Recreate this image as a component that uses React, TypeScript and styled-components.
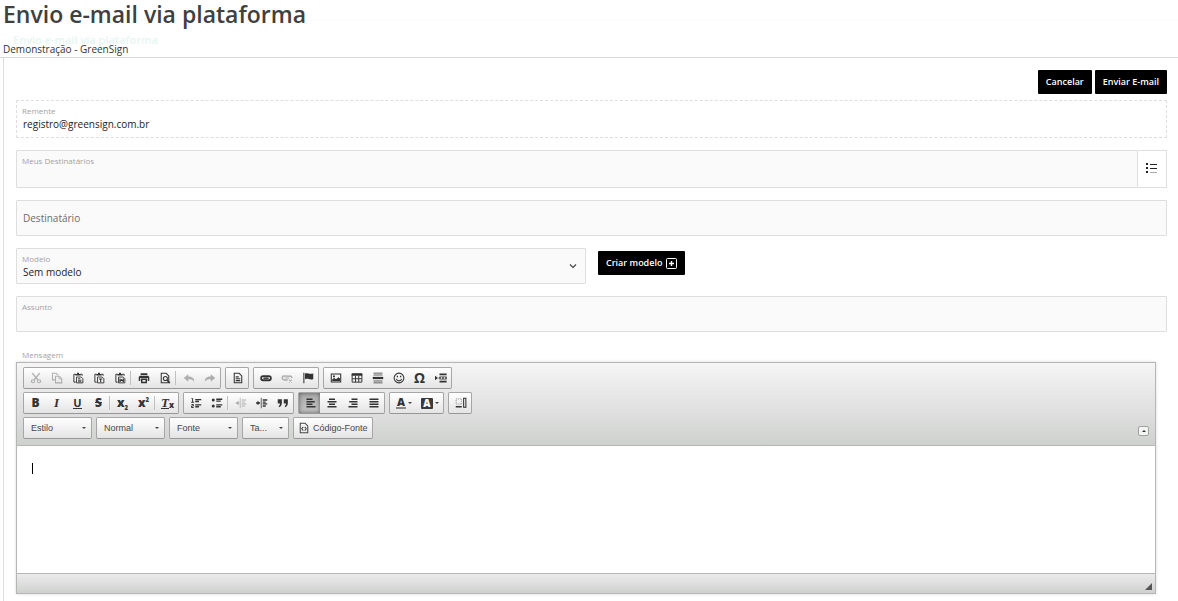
import React from "react";
import styled, { createGlobalStyle, css } from "styled-components";

const uiFont = `"Open Sans", "Noto Sans", sans-serif`;

const GlobalStyle = createGlobalStyle`
  *, *::before, *::after { box-sizing: border-box; }
  body { margin: 0; background: #fff; color: #222; font-family: ${uiFont}; }
  button, input, select { font-family: inherit; margin: 0; }
`;

const Page = styled.div`
  min-height: 100vh;
  display: flex;
  flex-direction: column;
`;

const Header = styled.header`
  position: relative;
  height: 58px;
  padding-left: 3px;
  border-bottom: 1px solid #d9d9d9;
`;

const Title = styled.h1`
  margin: 0;
  font-size: 23px;
  line-height: 28px;
  font-weight: 600;
  color: #404040;
  white-space: nowrap;
`;

const FadingTab = styled.div`
  position: absolute;
  z-index: -1;
  left: 3px;
  right: 0;
  top: 20px;
  padding: 13px 10px 0;
  border-top: 1px solid #fbfdfd;
  font-size: 11px;
  line-height: 12px;
  font-weight: 600;
  color: #e6f6f2;
`;

const Subtitle = styled.p`
  margin: 14px 0 0;
  font-size: 10px;
  line-height: 14px;
  color: #333;
`;

const Panel = styled.form`
  flex: 1;
  display: flex;
  flex-direction: column;
  gap: 12px;
  margin-left: 3px;
  padding: 12px 11px 7px 12px;
  border-left: 1px solid #dfdfdf;
`;

const Actions = styled.div`
  display: flex;
  justify-content: flex-end;
  gap: 3px;
  margin-bottom: -6px;
`;

const Button = styled.button`
  display: inline-flex;
  align-items: center;
  gap: 4px;
  height: 24px;
  padding: 0 8px;
  border: 0;
  border-radius: 1px;
  background: #000;
  color: #fff;
  font-size: 9px;
  line-height: 16px;
  font-weight: 600;
  white-space: nowrap;
`;

const Field = styled.div<{ $tall?: boolean; $dashed?: boolean; $center?: boolean }>`
  position: relative;
  flex: 1 0 auto;
  display: flex;
  flex-direction: column;
  justify-content: ${(p) => (p.$center ? "center" : "flex-start")};
  height: ${(p) => (p.$tall ? 38 : 36)}px;
  padding: 4px 5px 0;
  ${(p) => p.$center && css`padding-top: 0;`}
  border: 1px ${(p) => (p.$dashed ? "dashed" : "solid")} #dedede;
  border-radius: 1px;
  background: ${(p) => (p.$dashed ? "#fff" : "#fafafa")};
`;

const Fields = styled.div`
  display: flex;
  flex-direction: column;
  gap: 12px;
`;

const Label = styled.label`
  font-size: 8px;
  line-height: 12px;
  color: #a3a3a3;
`;

const inputText = css`
  width: 100%;
  height: 14px;
  padding: 0 1px;
  border: 0;
  outline: 0;
  background: transparent;
  color: #222;
  font-size: 10px;
  line-height: 14px;
`;

const Input = styled.input`
  ${inputText}
  &::placeholder { color: #6c6c6c; opacity: 1; }
`;

const Select = styled.select`
  ${inputText}
  appearance: none;
`;

const Joined = styled.div`
  display: flex;
`;

const ListButton = styled.button`
  width: 29px;
  display: flex;
  align-items: center;
  justify-content: center;
  padding: 0 2px 2px 0;
  border: 1px solid #dedede;
  border-left: 0;
  background: #fff;
  color: #222;
`;

const ModelRow = styled.div`
  display: grid;
  grid-template-columns: minmax(0, 570fr) minmax(0, 569fr);
  column-gap: 12px;
`;

const ModelAction = styled.div`
  display: flex;
  align-items: flex-start;
  padding-top: 3px;
`;

const SelectArrow = styled.svg`
  position: absolute;
  right: 8px;
  top: 13px;
  pointer-events: none;
`;

const Message = styled.section`
  display: flex;
  flex-direction: column;
  padding: 5px 11px 0 0;
`;

const MessageLabel = styled.div`
  padding-left: 6px;
  font-size: 8px;
  line-height: 12px;
  height: 13px;
  color: #a3a3a3;
`;

const Editor = styled.div`
  border: 1px solid #b6b6b6;
  box-shadow: 0 0 3px rgba(0, 0, 0, 0.15);
  font-family: "Liberation Sans", Arial, sans-serif;
`;

const Toolbar = styled.div`
  position: relative;
  display: flex;
  flex-direction: column;
  gap: 3px;
  padding: 4px 6px 6px;
  border-bottom: 1px solid #b6b6b6;
  background: linear-gradient(#f5f5f5, #cfd1cf);
`;

const ToolRow = styled.div`
  display: flex;
  gap: 4px;
`;

const Group = styled.div`
  display: flex;
  align-items: center;
  height: 22px;
  padding-right: 1px;
  border: 1px solid #a6a6a6;
  border-bottom-color: #979797;
  border-radius: 2px;
  background: linear-gradient(#fff, #e4e4e4);
`;

const Tool = styled.button<{ $off?: boolean; $on?: boolean; $wide?: boolean }>`
  display: flex;
  align-items: center;
  justify-content: center;
  width: ${(p) => (p.$wide ? 26 : 21)}px;
  height: 20px;
  padding: 0 0 0 2px;
  border: 0;
  background: ${(p) => (p.$on ? "linear-gradient(#aaa, #c4c4c4)" : "transparent")};
  box-shadow: ${(p) => (p.$on ? "inset 0 0 4px rgba(0,0,0,.5)" : "none")};
  color: #333;
  opacity: ${(p) => (p.$off ? 0.35 : 1)};
`;

const Divider = styled.span`
  width: 1px;
  height: 14px;
  margin: 0 1px;
  background: #c0c0c0;
`;

const Glyph = styled.span<{ $kind?: "i" | "u" | "s" | "bar" | "box" | "omega" }>`
  font-family: "Open Sans", sans-serif;
  font-size: 12px;
  line-height: 12px;
  font-weight: 800;
  ${(p) => p.$kind === "i" && css`font-family: "Liberation Serif", serif; font-size: 13px; font-style: italic;`}
  ${(p) => p.$kind === "u" && css`font-size: 11px; line-height: 10px; font-weight: 700; border-bottom: 1px solid #333;`}
  ${(p) => p.$kind === "s" && css`text-decoration: line-through;`}
  ${(p) => p.$kind === "omega" && css`font-size: 14px; font-weight: 700;`}
  ${(p) => p.$kind === "bar" && css`font-size: 11px; line-height: 10px; padding: 0 1px; border-bottom: 2px solid #888;`}
  ${(p) => p.$kind === "box" && css`font-size: 10px; line-height: 11px; padding: 0 2px; border-radius: 1px; background: #3a3a3a; color: #fff;`}
  sub, sup { font-size: 6px; line-height: 0; }
`;

const Clear = styled.span`
  display: flex;
  align-items: flex-end;
  font-family: "Liberation Serif", serif;
  font-size: 13px;
  line-height: 12px;
  font-weight: 700;
  i { border-bottom: 1px solid #333; line-height: 10px; }
  small { font-family: "Open Sans", sans-serif; font-size: 8px; line-height: 8px; font-weight: 800; }
`;

const Caret = styled.span`
  width: 0;
  margin-left: 2px;
  border: 2px solid transparent;
  border-top-color: #444;
  border-bottom: 0;
`;

const Combo = styled.div<{ $small?: boolean }>`
  position: relative;
  display: flex;
  align-items: center;
  width: ${(p) => (p.$small ? 47 : 69)}px;
  height: 22px;
  border: 1px solid #a6a6a6;
  border-bottom-color: #979797;
  border-radius: 2px;
  background: linear-gradient(#fff, #e4e4e4);
  ${Caret} { position: absolute; right: 5px; pointer-events: none; }
`;

const ComboSelect = styled.select`
  appearance: none;
  width: 100%;
  height: 18px;
  padding: 0 12px 0 7px;
  border: 0;
  background: transparent;
  color: #474747;
  font-size: 9px;
  line-height: 16px;
`;

const SourceButton = styled.button`
  display: flex;
  align-items: center;
  gap: 3px;
  height: 22px;
  padding: 0 4px;
  border: 1px solid #a6a6a6;
  border-bottom-color: #979797;
  border-radius: 2px;
  background: linear-gradient(#fff, #e4e4e4);
  color: #474747;
  font-size: 9px;
  white-space: nowrap;
`;

const Collapse = styled.button`
  display: flex;
  align-items: center;
  justify-content: center;
  align-self: flex-end;
  width: 11px;
  height: 10px;
  margin: 0 0 3px auto;
  padding: 0;
  border: 1px solid #a0a0a0;
  border-radius: 2px;
  background: #f4f4f4;
`;

const Body = styled.div`
  height: 127px;
  padding: 17px 15px;
  background: #fff;
  outline: 0;
`;

const TextCursor = styled.span`
  display: block;
  width: 1px;
  height: 11px;
  background: #000;
`;

const Footer = styled.div`
  display: flex;
  align-items: flex-end;
  justify-content: flex-end;
  height: 20px;
  padding: 3px;
  border-top: 1px solid #b6b6b6;
  background: linear-gradient(#ebebeb, #cfd1cf);
`;

const Svg = ({ children, size = 12 }: { children: React.ReactNode; size?: number }) => (
  <svg width={size} height={size} viewBox="0 0 16 16" fill="none" stroke="currentColor" strokeWidth="1.4" aria-hidden="true">
    {children}
  </svg>
);

const clipboard = (
  <>
    <path d="M5 3H2.500v10.500H5M11 3h2.500v2" strokeWidth="1.300" />
    <path d="M4.500 2.500h2.200V1h2.600v1.500h2.200v2.300h-7z" fill="currentColor" stroke="none" />
    <path d="M6 6.700h6.300l2.200 2.200v5.600H6z" strokeWidth="1.200" />
  </>
);

const page = <path d="M3 1.7h6.5L13 5.2v9.1H3z" />;
const solid = { fill: "currentColor", stroke: "none" };

const icons: Record<string, React.ReactNode> = {
  cut: <><path d="M3 1.5l7.5 9M13 1.5l-7.5 9" strokeWidth="2" /><circle cx="4" cy="12.3" r="2.1" /><circle cx="12" cy="12.3" r="2.1" /></>,
  copy: <><path d="M5 10.5H2V1.7h5l2.5 2.5" /><path d="M6 5.7h5l3.2 3.2v5.6H6z" /><path d="M10.5 6v3.2H14" strokeWidth="1" /></>,
  paste: <>{clipboard}<path d="M8 9h3M8 11h4.500M8 13h4.500" strokeWidth="1.2" /></>,
  pasteText: <>{clipboard}<path d="M8 9.300h4.500M10.2 9v4.500" /></>,
  pasteWord: <>{clipboard}<path d="M8 8.500v4l2.200-2 2.200 2v-4" strokeWidth="1.6" /></>,
  print: <><path d="M3.5 1.500h9V4h-9zM2.500 5h11L15 6.500V12h-2V8H3v4H1V6.500z" {...solid} /><path d="M5 9.500h6v4.500H5z" strokeWidth="2" /></>,
  preview: <>{page}<circle cx="8.5" cy="8.7" r="2.7" /><path d="M10.5 10.7l4 4" strokeWidth="2" /></>,
  undo: <path d="M7 3v3c5 0 8 2 8 7-2-3-4-3.500-8-3.500V13L1 8z" {...solid} />,
  redo: <path d="M9 3v3c-5 0-8 2-8 7 2-3 4-3.500 8-3.500V13l6-5z" {...solid} />,
  template: <>{page}<path d="M5 6.500h4M5 9h6M5 11.500h6" /></>,
  link: <><rect x="1.500" y="5.500" width="13" height="5.500" rx="2.700" strokeWidth="2.400" /><path d="M4.500 8.200h7" strokeWidth="2" /></>,
  unlink: <><path d="M9 10.500H4.200a2.500 2.500 0 010-5h7.600a2.500 2.500 0 012.700 2.500" strokeWidth="2" /><path d="M5 8h6M10.500 10l4 4M14.500 10l-4 4" /></>,
  anchor: <><path d="M2.500 1v14" /><path d="M4 2c3-1.500 5 1.500 11 0v7.500c-5 1.500-7-1.500-11 0z" {...solid} /></>,
  image: <><rect x="1.700" y="2.700" width="12.600" height="10.600" /><path d="M3 12V9.500L5.500 8 8 9.500 11.500 7l2 2v3zM4 4.500h2.500V7H4z" {...solid} /></>,
  table: <><path d="M1 2h14v3H1z" {...solid} /><path d="M1.500 2.500h13v11h-13zM1.500 9h13M6 5v8.500M10.300 5v8.500" strokeWidth="1.300" /></>,
  rule: <><path d="M2 1.500h12M2 4h12M2 12h12M2 14.500h12" strokeWidth="1" /><path d="M1 8h14" strokeWidth="3" /></>,
  smile: <><circle cx="8" cy="8" r="6.500" /><path d="M4.500 9.300c1 3.400 6 3.400 7 0" /><path d="M5 5h1.700v2H5zM9.300 5H11v2H9.300z" {...solid} /></>,
  pageBreak: <><path d="M0 5l4 3-4 3z" {...solid} /><path d="M6 3h9.500M6 13h9.500" strokeWidth="2" /><path d="M6 5.500h9.500M6 10.500h9.500" strokeWidth="1" /><path d="M5 8h11" strokeDasharray="3 1" strokeWidth="2" /></>,
  numbered: <><path d="M7 3.500h8M7 6h5M7 10.500h8M7 13h5" strokeWidth="1.700" /><path d="M2 2h1.500v5M1.500 7h4M2 10h2.500v2H2v2h3" strokeWidth="1.300" /></>,
  bullets: <><circle cx="3" cy="4" r="2" {...solid} /><circle cx="3" cy="12" r="2" {...solid} /><path d="M7 3h8M7 5.500h6M7 10.500h8M7 13h6" strokeWidth="1.700" /></>,
  outdent: <><path d="M7 1v14" strokeWidth="1" /><path d="M9 4h6M9 6.700h4M9 9.300h6M9 12h4M1 8h5" /><path d="M5 5L1 8l4 3z" {...solid} /></>,
  indent: <><path d="M7 1v14" strokeWidth="1" /><path d="M9 4h6M9 6.700h4M9 9.300h6M9 12h4M0 8h4" strokeWidth="1.700" /><path d="M2 5l4 3-4 3z" {...solid} /></>,
  quote: <path d="M1 3h5.500v5c0 3-1.500 5-4 5.500V11.500c1-.5 1.500-1.500 1.500-3H1zM9 3h5.500v5c0 3-1.500 5-4 5.500V11.500c1-.5 1.500-1.500 1.500-3H9z" {...solid} />,
  left: <path d="M2 3h8M2 6.300h11M2 9.600h8M2 13h12" strokeWidth="2" />,
  center: <path d="M4 3h8M2 6.300h12M4 9.600h8M2 13h12" strokeWidth="2" />,
  right: <path d="M6 3h8M3 6.300h11M6 9.600h8M2 13h12" strokeWidth="2" />,
  justify: <path d="M2 3h12M2 6.300h12M2 9.600h12M2 13h12" strokeWidth="2" />,
  blocks: <><path d="M1.500 2.500h7v7h-7z" strokeDasharray="1.500 1" strokeWidth="1" opacity=".6" /><path d="M1 13h8" strokeWidth="2" /><rect x="11.500" y="1.700" width="3" height="12" /></>,
  source: <>{page}<path d="M7 6.500L5 9l2 2.500M9 6.500L11 9l-2 2.500" /></>,
};

type ToolItem = { id: string; name: string; off?: boolean; on?: boolean } | "|";

const t = (id: string, name: string, flags: { off?: boolean; on?: boolean } = {}): ToolItem => ({ id, name, ...flags });

const glyphs: Record<string, React.ReactNode> = {
  bold: <Glyph>B</Glyph>,
  italic: <Glyph $kind="i">I</Glyph>,
  underline: <Glyph $kind="u">U</Glyph>,
  strike: <Glyph $kind="s">S</Glyph>,
  sub: <Glyph>x<sub>2</sub></Glyph>,
  sup: <Glyph>x<sup>2</sup></Glyph>,
  clear: <Clear><i>T</i><small>x</small></Clear>,
  omega: <Glyph $kind="omega">Ω</Glyph>,
};

const rowOne: ToolItem[][] = [
  [
    t("cut", "Recortar", { off: true }), t("copy", "Copiar", { off: true }), t("paste", "Colar"),
    t("pasteText", "Colar como texto"), t("pasteWord", "Colar do Word"), "|",
    t("print", "Imprimir"), t("preview", "Visualizar"), "|",
    t("undo", "Desfazer", { off: true }), t("redo", "Refazer", { off: true }),
  ],
  [t("template", "Modelos")],
  [t("link", "Link"), t("unlink", "Remover link", { off: true }), t("anchor", "Âncora")],
  [
    t("image", "Imagem"), t("table", "Tabela"), t("rule", "Linha horizontal"),
    t("smile", "Emoticon"), t("omega", "Caractere especial"), t("pageBreak", "Quebra de página"),
  ],
];

const rowTwo: ToolItem[][] = [
  [
    t("bold", "Negrito"), t("italic", "Itálico"), t("underline", "Sublinhado"), t("strike", "Tachado"), "|",
    t("sub", "Subscrito"), t("sup", "Sobrescrito"), "|", t("clear", "Remover formatação"),
  ],
  [
    t("numbered", "Lista numerada"), t("bullets", "Lista"), "|",
    t("outdent", "Diminuir recuo", { off: true }), t("indent", "Aumentar recuo"), t("quote", "Citação"),
  ],
  [t("left", "Esquerda", { on: true }), t("center", "Centralizar"), t("right", "Direita"), t("justify", "Justificado")],
];

const ToolGroup = ({ items }: { items: ToolItem[] }) => (
  <Group>
    {items.map((item, i) =>
      item === "|" ? (
        <Divider key={i} />
      ) : (
        <Tool key={i} type="button" aria-label={item.name} $off={item.off} $on={item.on}>
          {glyphs[item.id] ?? <Svg>{icons[item.id]}</Svg>}
        </Tool>
      ),
    )}
  </Group>
);

const ToolCombo = ({ text, name, small }: { text: string; name: string; small?: boolean }) => (
  <Combo $small={small}>
    <ComboSelect aria-label={name}>
      <option>{text}</option>
    </ComboSelect>
    <Caret />
  </Combo>
);

export default function App() {
  return (
    <>
      <GlobalStyle />
      <Page>
        <Header>
          <Title>Envio e-mail via plataforma</Title>
          <FadingTab aria-hidden="true">Envio e-mail via plataforma</FadingTab>
          <Subtitle>Demonstração - GreenSign</Subtitle>
        </Header>
        <Panel onSubmit={(e) => e.preventDefault()}>
          <Actions>
            <Button type="button">Cancelar</Button>
            <Button type="submit">Enviar E-mail</Button>
          </Actions>
          <Fields>
            <Field $tall $dashed>
              <Label htmlFor="sender">Remente</Label>
              <Input id="sender" readOnly value="registro@greensign.com.br" />
            </Field>
            <Joined>
              <Field $tall>
                <Label htmlFor="contacts">Meus Destinatários</Label>
                <Input id="contacts" />
              </Field>
              <ListButton type="button" aria-label="Listar destinatários">
                <svg width="11" height="10" viewBox="0 0 11 10" fill="currentColor" aria-hidden="true">
                  <path d="M0 0h2v2H0zM0 4h2v2H0zM0 8h2v2H0zM4 1h7v1H4zM4 5h7v1H4z" />
                  <path d="M4 9h7v1H4z" opacity=".4" />
                </svg>
              </ListButton>
            </Joined>
            <Field $center>
              <Input aria-label="Destinatário" placeholder="Destinatário" />
            </Field>
            <ModelRow>
              <Field>
                <Label htmlFor="model">Modelo</Label>
                <Select id="model">
                  <option>Sem modelo</option>
                </Select>
                <SelectArrow width="8" height="8" viewBox="0 0 8 8" fill="none" stroke="#444" strokeWidth="1.200">
                  <path d="M1 2.500l3 3 3-3" />
                </SelectArrow>
              </Field>
              <ModelAction>
                <Button type="button">
                  Criar modelo
                  <svg width="11" height="11" viewBox="0 0 11 11" fill="none" stroke="#fff" aria-hidden="true">
                    <rect x=".5" y=".5" width="10" height="10" rx="1" />
                    <path d="M5.500 3v5M3 5.500h5" strokeWidth="1.400" />
                  </svg>
                </Button>
              </ModelAction>
            </ModelRow>
            <Field>
              <Label htmlFor="subject">Assunto</Label>
              <Input id="subject" />
            </Field>
          </Fields>
          <Message>
            <MessageLabel id="message-label">Mensagem</MessageLabel>
            <Editor>
              <Toolbar>
                <ToolRow>
                  {rowOne.map((g, i) => <ToolGroup key={i} items={g} />)}
                </ToolRow>
                <ToolRow>
                  {rowTwo.map((g, i) => <ToolGroup key={i} items={g} />)}
                  <Group>
                    <Tool type="button" $wide aria-label="Cor do texto"><Glyph $kind="bar">A</Glyph><Caret /></Tool>
                    <Tool type="button" $wide aria-label="Cor do fundo"><Glyph $kind="box">A</Glyph><Caret /></Tool>
                  </Group>
                  <Group>
                    <Tool type="button" aria-label="Mostrar blocos"><Svg>{icons.blocks}</Svg></Tool>
                  </Group>
                </ToolRow>
                <ToolRow>
                  <ToolCombo text="Estilo" name="Estilo" />
                  <ToolCombo text="Normal" name="Formatação" />
                  <ToolCombo text="Fonte" name="Fonte" />
                  <ToolCombo text="Ta..." name="Tamanho" small />
                  <SourceButton type="button"><Svg>{icons.source}</Svg>Código-Fonte</SourceButton>
                  <Collapse type="button" aria-label="Recolher barra">
                    <svg width="4" height="2" viewBox="0 0 4 2" fill="#333"><path d="M0 2l2-2 2 2z" /></svg>
                  </Collapse>
                </ToolRow>
              </Toolbar>
              <Body contentEditable suppressContentEditableWarning role="textbox" aria-multiline="true" aria-labelledby="message-label">
                <TextCursor />
              </Body>
              <Footer>
                <svg width="7" height="7" viewBox="0 0 7 7" fill="#555"><path d="M7 0v7H0z" /></svg>
              </Footer>
            </Editor>
          </Message>
        </Panel>
      </Page>
    </>
  );
}
